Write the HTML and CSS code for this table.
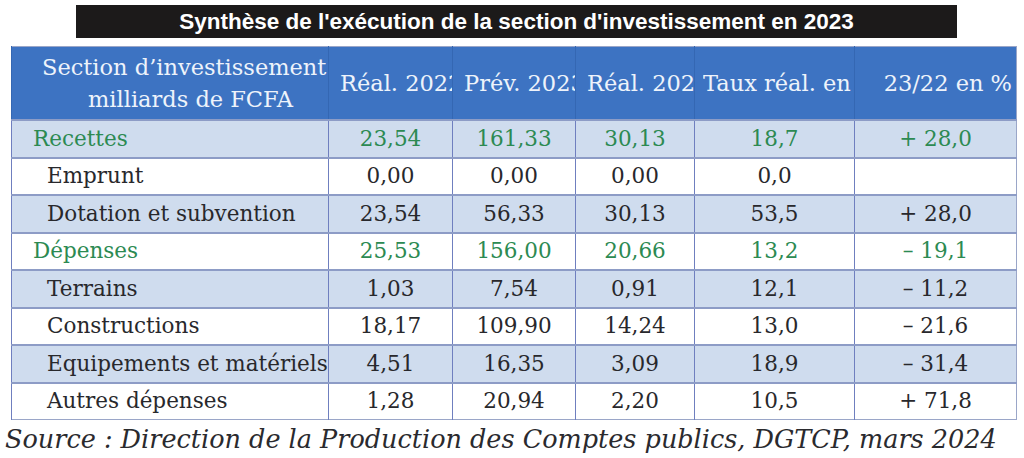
FILE: index.html
```html
<!DOCTYPE html>
<html lang="fr">
<head>
<meta charset="utf-8">
<link rel="stylesheet" href="styles.css">
</head>
<body>
<div class="page">
  <div class="title">Synthèse de l'exécution de la section d'investissement en 2023</div>
  <table class="synth">
    <colgroup>
      <col class="c1"><col class="c2"><col class="c3"><col class="c4"><col class="c5"><col class="c6">
    </colgroup>
    <thead>
      <tr>
        <th class="first"><div class="clip">Section d’investissement en</div><div class="line2">milliards de FCFA</div></th>
        <th><div class="clip">Réal. 2022</div></th>
        <th><div class="clip">Prév. 2023</div></th>
        <th><div class="clip">Réal. 2023</div></th>
        <th class="narrow"><div class="clip">Taux réal. en %</div></th>
        <th class="right"><div class="clip">23/22 en %</div></th>
      </tr>
    </thead>
    <tbody>
      <tr class="alt total"><td class="lbl">Recettes</td><td>23,54</td><td>161,33</td><td>30,13</td><td>18,7</td><td>+ 28,0</td></tr>
      <tr><td class="lbl sub">Emprunt</td><td>0,00</td><td>0,00</td><td>0,00</td><td>0,0</td><td></td></tr>
      <tr class="alt"><td class="lbl sub">Dotation et subvention</td><td>23,54</td><td>56,33</td><td>30,13</td><td>53,5</td><td>+ 28,0</td></tr>
      <tr class="total"><td class="lbl">Dépenses</td><td>25,53</td><td>156,00</td><td>20,66</td><td>13,2</td><td>– 19,1</td></tr>
      <tr class="alt"><td class="lbl sub">Terrains</td><td>1,03</td><td>7,54</td><td>0,91</td><td>12,1</td><td>– 11,2</td></tr>
      <tr><td class="lbl sub">Constructions</td><td>18,17</td><td>109,90</td><td>14,24</td><td>13,0</td><td>– 21,6</td></tr>
      <tr class="alt"><td class="lbl sub">Equipements et matériels</td><td>4,51</td><td>16,35</td><td>3,09</td><td>18,9</td><td>– 31,4</td></tr>
      <tr><td class="lbl sub">Autres dépenses</td><td>1,28</td><td>20,94</td><td>2,20</td><td>10,5</td><td>+ 71,8</td></tr>
    </tbody>
  </table>
  <p class="source">Source : Direction de la Production des Comptes publics, DGTCP, mars 2024</p>
</div>
</body>
</html>
```

FILE: styles.css
```css
html, body {
  margin: 0;
  padding: 0;
  background: #ffffff;
}
.page {
  width: 1024px;
  height: 458px;
  padding-top: 5px;
  box-sizing: border-box;
  overflow: hidden;
}
.title {
  margin-left: 76px;
  width: 881px;
  height: 33px;
  background: #1c1a1a;
  color: #ffffff;
  font-family: "Liberation Sans", Arial, sans-serif;
  font-weight: bold;
  font-size: 22.5px;
  line-height: 33px;
  text-align: center;
}
.synth {
  margin: 8px 0 0 11px;
  width: 1005px;
  border-collapse: collapse;
  table-layout: fixed;
  font-family: "DejaVu Serif", serif;
  font-size: 21.5px;
  color: #28282c;
  border: 1px solid #9aa6c8;
}
.c1 { width: 317px; }
.c2 { width: 124px; }
.c3 { width: 123px; }
.c4 { width: 119px; }
.c5 { width: 160px; }
.c6 { width: 162px; }
.synth th {
  height: 72px;
  background: #3d73c2;
  color: #eef3fb;
  font-weight: normal;
  font-size: 22.5px;
  padding: 0 0 0 11px;
  text-align: left;
  border-left: 1px solid #3467b3;
  line-height: 32px;
  overflow: hidden;
}
.synth th.first {
  padding-left: 30px;
}
.synth th.narrow {
  padding-left: 8px;
}
.synth th .clip {
  white-space: nowrap;
  overflow: hidden;
}
.synth th .line2 {
  padding-left: 46px;
  white-space: nowrap;
}
.synth th.right {
  padding: 0 4px 0 0;
}
.synth th.right .clip {
  text-align: right;
}
.synth td {
  height: 35.5px;
  padding: 0 4px;
  text-align: center;
  border-left: 1px solid #6f7fbf;
  border-top: 2px solid #8d9cc6;
  white-space: nowrap;
  overflow: hidden;
  line-height: 34px;
}
.synth tr.alt td {
  background: #cfdcee;
}
.synth td.lbl {
  text-align: left;
  padding: 0 0 0 21px;
}
.synth td.sub {
  padding-left: 35px;
}
.synth tr.total td {
  color: #2c8a52;
}
.source {
  margin: 3px 0 0 5px;
  font-family: "DejaVu Serif", serif;
  font-style: italic;
  font-size: 25.5px;
  line-height: 32px;
  color: #2a2a2e;
  white-space: nowrap;
}
```
